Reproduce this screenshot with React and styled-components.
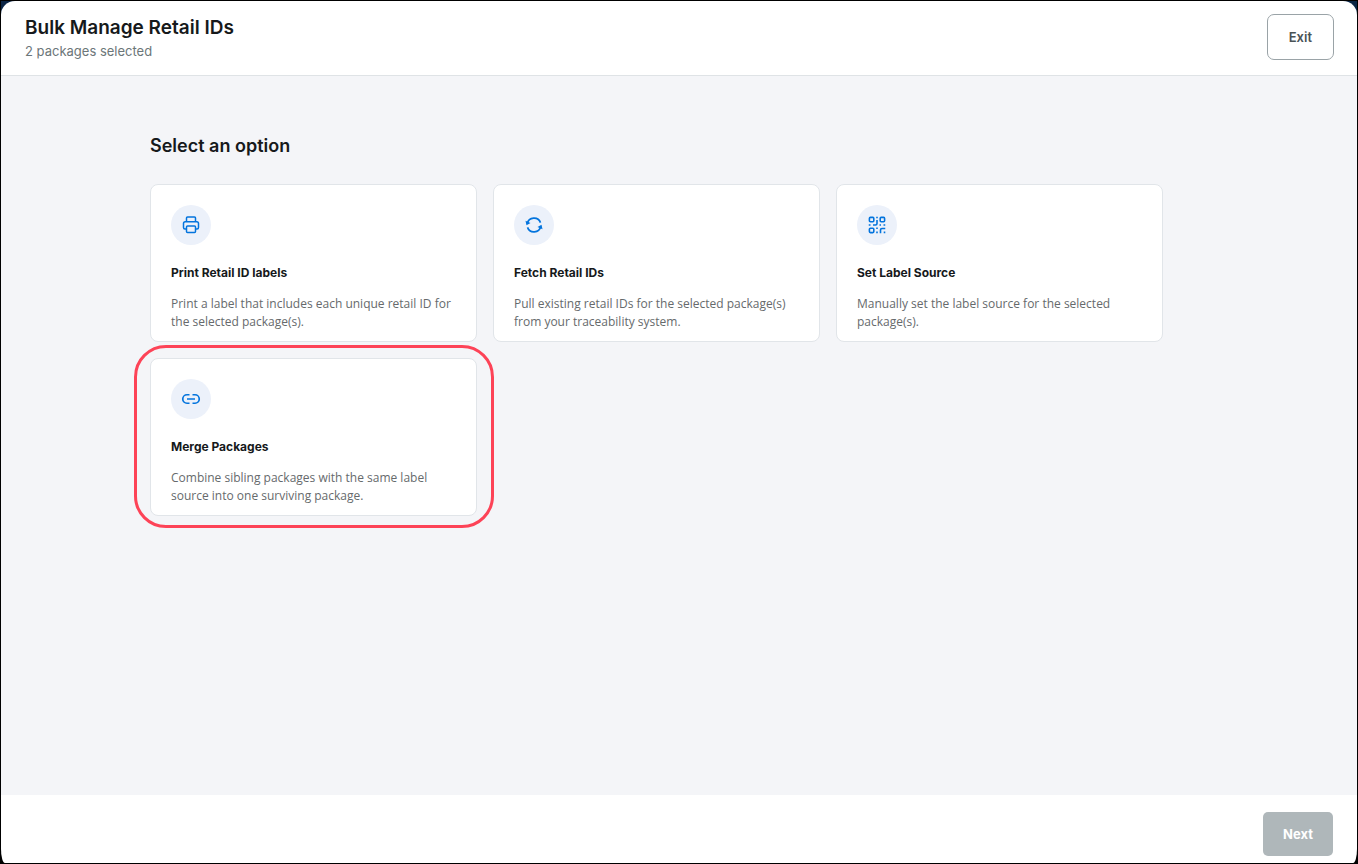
import React from "react";
import styled, { createGlobalStyle } from "styled-components";

const GlobalStyle = createGlobalStyle`
  * {
    box-sizing: border-box;
  }

  body {
    margin: 0;
    font-family: "Inter", "Liberation Sans", sans-serif;
    color: #16191b;
  }

  h1, h2, h3, p {
    margin: 0;
  }
`;

const Backdrop = styled.div`
  min-height: 100vh;
  display: flex;
  border: 1px solid #000;
  background: linear-gradient(#0b2545 50%, #000 50%);
`;

const Modal = styled.div`
  flex: 1;
  display: flex;
  flex-direction: column;
  overflow: hidden;
  background: #fff;
  border-radius: 14px 14px 4px 4px / 14px 14px 14px 14px;
`;

const Header = styled.header`
  display: flex;
  align-items: flex-start;
  justify-content: space-between;
  padding: 13px 23px 14px 24px;
  border-bottom: 1px solid #dfe3e6;
`;

const Heading = styled.div`
  padding-top: 1px;
`;

const Title = styled.h1`
  font-size: 19px;
  font-weight: 600;
  line-height: 26px;
`;

const Subtitle = styled.p`
  font-size: 13px;
  line-height: 20px;
  color: #6c7679;
`;

const Button = styled.button`
  height: ${(props) => (props.$primary ? "44px" : "46px")};
  padding: 0 ${(props) => (props.$primary ? "20px" : "21px")};
  font-family: inherit;
  font-size: 13px;
  font-weight: ${(props) => (props.$primary ? 700 : 600)};
  border-radius: ${(props) => (props.$primary ? "5px" : "7px")};
  border: ${(props) => (props.$primary ? "none" : "1px solid #9aa3a7")};
  background: ${(props) => (props.$primary ? "#afb7ba" : "#fff")};
  color: ${(props) => (props.$primary ? "#fff" : "#4a5356")};
`;

const Main = styled.main`
  flex: 1;
  padding: 56px 194px 56px 149px;
  background: #f4f5f8;
`;

const SectionTitle = styled.h2`
  margin-bottom: 24px;
  font-size: 18px;
  font-weight: 600;
  line-height: 28px;
`;

const Options = styled.div`
  display: grid;
  grid-template-columns: repeat(3, 1fr);
  gap: 16px;
`;

const Card = styled.article`
  position: relative;
  min-height: 158px;
  padding: 20px 20px 10px;
  background: #fff;
  border: 1px solid #e1e5e9;
  border-radius: 8px;
`;

const Highlight = styled.span`
  position: absolute;
  inset: -14px -18px -13px -17px;
  border: 3px solid #fd4357;
  border-radius: 32px;
  pointer-events: none;
`;

const IconCircle = styled.div`
  display: flex;
  align-items: center;
  justify-content: center;
  width: 40px;
  height: 40px;
  margin-bottom: 18px;
  border-radius: 50%;
  background: #ecf1fa;
  color: #0374dd;
`;

const CardTitle = styled.h3`
  margin-bottom: 12px;
  font-size: 12px;
  font-weight: 700;
  line-height: 20px;
`;

const CardText = styled.p`
  font-family: "Open Sans", "Inter", sans-serif;
  font-size: 12px;
  line-height: 18px;
  color: #666a6c;
`;

const Footer = styled.footer`
  display: flex;
  justify-content: flex-end;
  padding: 17px 24px 7px;
`;

function Icon({ children, strokeWidth = 1.5 }) {
  return (
    <svg
      width="20"
      height="20"
      viewBox="0 0 20 20"
      fill="none"
      stroke="currentColor"
      strokeWidth={strokeWidth}
      aria-hidden="true"
    >
      {children}
    </svg>
  );
}

const PrintIcon = () => (
  <Icon>
    <path d="M5.5 6.5V3q0-1 1-1h7q1 0 1 1v3.5" />
    <path d="M5.5 14H4q-1.5 0-1.5-1.5V8.5q0-1.75 1.75-1.75h11.5q1.75 0 1.75 1.75v4q0 1.5-1.5 1.5h-1.5" />
    <rect x="5.5" y="11" width="9" height="6.5" rx="1" />
  </Icon>
);

const FetchIcon = () => (
  <Icon strokeWidth={1.7}>
    <path d="M3.3 8.5A6.9 6.9 0 0 1 16.5 7.6M16.7 11.5A6.9 6.9 0 0 1 3.5 12.4" />
    <path
      d="M1.5 5.8l5 2.2-4 2.2zM18.5 14.2l-5-2.2 4-2.2z"
      fill="currentColor"
      stroke="none"
    />
  </Icon>
);

const QrIcon = () => (
  <Icon strokeWidth={1.6}>
    <rect x="2.4" y="2.4" width="4.4" height="4.4" rx="1" />
    <rect x="13.2" y="2.4" width="4.4" height="4.4" rx="1" />
    <rect x="2.4" y="13.2" width="4.4" height="4.4" rx="1" />
    <path d="M10 1.75v1.6M10 5v3.5q0 1.5-1.5 1.5H6M1.75 10h1.75M12.5 10H14M16.5 10h1.75M10 12.5V14M10 16.5v1.75M13.5 18.25V15q0-1.5 1.5-1.5h3.25M17.5 16.5v1.75" />
  </Icon>
);

const MergeIcon = () => (
  <Icon strokeWidth={1.7}>
    <path d="M8.5 5.75H6a4.25 4.25 0 0 0 0 8.5h2.5M11.5 5.75H14a4.25 4.25 0 0 1 0 8.5h-2.5M6 10h8" />
  </Icon>
);

const options = [
  {
    title: "Print Retail ID labels",
    text: "Print a label that includes each unique retail ID for the selected package(s).",
    icon: PrintIcon,
  },
  {
    title: "Fetch Retail IDs",
    text: "Pull existing retail IDs for the selected package(s) from your traceability system.",
    icon: FetchIcon,
  },
  {
    title: "Set Label Source",
    text: "Manually set the label source for the selected package(s).",
    icon: QrIcon,
  },
  {
    title: "Merge Packages",
    text: "Combine sibling packages with the same label source into one surviving package.",
    icon: MergeIcon,
    highlighted: true,
  },
];

export default function App() {
  return (
    <Backdrop>
      <GlobalStyle />
      <Modal>
        <Header>
          <Heading>
            <Title>Bulk Manage Retail IDs</Title>
            <Subtitle>2 packages selected</Subtitle>
          </Heading>
          <Button type="button">Exit</Button>
        </Header>

        <Main>
          <SectionTitle>Select an option</SectionTitle>
          <Options>
            {options.map(({ title, text, icon: OptionIcon, highlighted }) => (
              <Card key={title}>
                <IconCircle>
                  <OptionIcon />
                </IconCircle>
                <CardTitle>{title}</CardTitle>
                <CardText>{text}</CardText>
                {highlighted && <Highlight />}
              </Card>
            ))}
          </Options>
        </Main>

        <Footer>
          <Button type="button" $primary disabled>
            Next
          </Button>
        </Footer>
      </Modal>
    </Backdrop>
  );
}
